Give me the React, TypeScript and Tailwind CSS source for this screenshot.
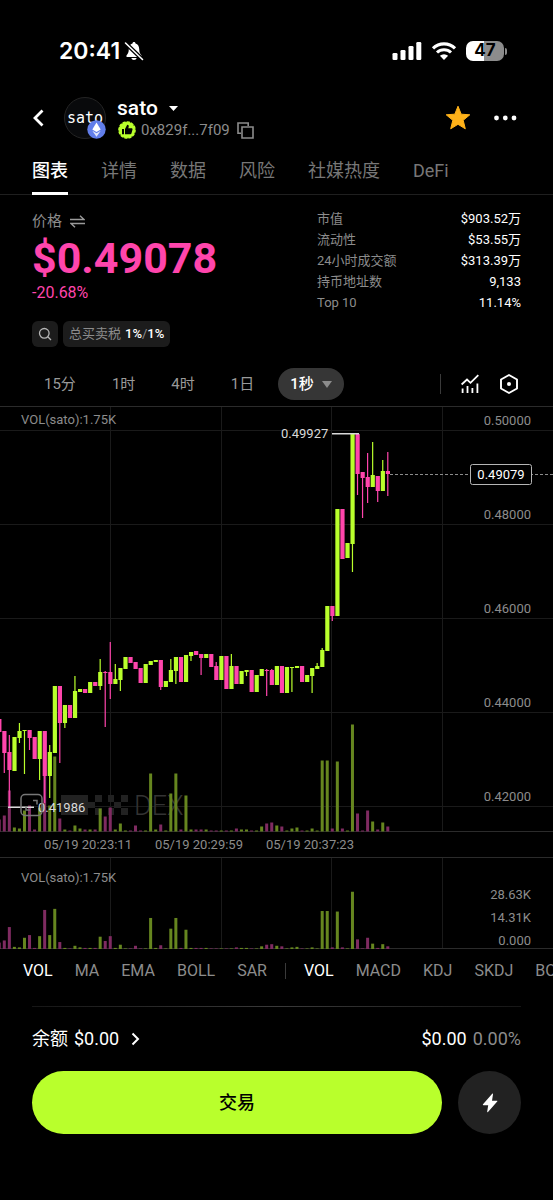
import React from 'react'

type Candle = {
  up: boolean
  high: number
  top: number
  bottom: number
  low: number
  vol: number
}

const UP = '#b9ff2c'
const DOWN = '#ff45ac'
const VOL_UP = '#66861f'
const VOL_DOWN = '#7f2b61'

// [up, high, top, bottom, low, volume]
const rows: [number, number, number, number, number, number][] = [
  [0, 313, 313, 326, 326, 12],
  [0, 325, 325, 347, 367, 16],
  [0, 329, 346, 364, 402, 41],
  [1, 331, 331, 365, 365, 4],
  [1, 317, 325, 332, 337, 3],
  [1, 324, 324, 325, 368, 21],
  [0, 324, 324, 332, 344, 26],
  [0, 331, 331, 353, 353, 2],
  [1, 325, 325, 353, 374, 24],
  [0, 325, 325, 370, 397, 73],
  [1, 339, 346, 370, 392, 26],
  [1, 280, 280, 347, 347, 75],
  [0, 280, 280, 317, 357, 13],
  [1, 299, 299, 317, 322, 2],
  [0, 299, 299, 312, 312, 1],
  [1, 270, 285, 312, 312, 6],
  [1, 283, 283, 286, 286, 3],
  [0, 283, 283, 287, 287, 2],
  [1, 276, 276, 287, 287, 2],
  [0, 276, 276, 280, 280, 2],
  [1, 253, 266, 280, 284, 23],
  [0, 265, 266, 267, 321, 15],
  [0, 236, 266, 278, 293, 24],
  [1, 258, 273, 278, 278, 2],
  [1, 262, 262, 274, 285, 8],
  [1, 251, 251, 263, 263, 1],
  [0, 251, 251, 257, 257, 1],
  [0, 256, 256, 263, 263, 6],
  [0, 262, 262, 277, 277, 1],
  [1, 258, 258, 277, 277, 1],
  [1, 255, 255, 259, 259, 58],
  [1, 254, 254, 256, 256, 2],
  [0, 254, 254, 281, 284, 7],
  [1, 275, 275, 281, 281, 1],
  [1, 253, 264, 276, 276, 38],
  [1, 251, 251, 265, 278, 58],
  [0, 251, 251, 276, 276, 2],
  [1, 249, 249, 276, 276, 36],
  [1, 246, 246, 250, 255, 2],
  [0, 245, 245, 249, 249, 2],
  [0, 248, 248, 252, 269, 2],
  [1, 248, 248, 252, 252, 2],
  [0, 248, 248, 261, 261, 1],
  [0, 256, 260, 274, 274, 1],
  [1, 250, 250, 274, 274, 1],
  [0, 250, 250, 283, 283, 1],
  [1, 248, 260, 283, 283, 1],
  [0, 260, 260, 278, 278, 3],
  [1, 265, 265, 278, 278, 2],
  [1, 264, 264, 266, 270, 2],
  [0, 264, 264, 286, 286, 1],
  [1, 269, 269, 286, 286, 1],
  [1, 263, 263, 270, 270, 5],
  [0, 263, 264, 265, 290, 8],
  [0, 263, 264, 279, 279, 9],
  [1, 260, 260, 279, 279, 6],
  [0, 260, 260, 287, 287, 5],
  [1, 261, 261, 287, 287, 1],
  [1, 261, 261, 262, 286, 3],
  [1, 260, 260, 262, 262, 4],
  [0, 260, 260, 276, 276, 1],
  [1, 269, 269, 276, 276, 1],
  [1, 262, 262, 270, 287, 3],
  [1, 257, 260, 263, 263, 1],
  [1, 242, 244, 261, 261, 71],
  [1, 200, 200, 245, 245, 71],
  [0, 200, 200, 210, 215, 3],
  [1, 103, 103, 210, 210, 70],
  [0, 103, 103, 153, 153, 3],
  [1, 137, 137, 152, 152, 1],
  [1, 28, 28, 138, 166, 107],
  [0, 28, 28, 68, 89, 18],
  [0, 66, 66, 72, 112, 1],
  [0, 47, 71, 81, 97, 21],
  [1, 36, 69, 81, 81, 10],
  [0, 70, 70, 85, 96, 2],
  [1, 54, 65, 85, 85, 9],
  [0, 46, 65, 68, 90, 5],
]

const candles: Candle[] = rows.map(([up, high, top, bottom, low, vol]) => ({
  up: up === 1,
  high,
  top,
  bottom,
  low,
  vol,
}))

const candleX = (i: number) => -0.75 + i * 5.046

const gridX = [110.5, 221.5, 331.5, 442.5]

const priceAxis = [
  { label: '0.50000', y: 25 },
  { label: '0.48000', y: 119 },
  { label: '0.46000', y: 213 },
  { label: '0.44000', y: 307 },
  { label: '0.42000', y: 401 },
]

const timeAxis = [
  { label: '05/19 20:23:11', x: 44 },
  { label: '05/19 20:29:59', x: 155 },
  { label: '05/19 20:37:23', x: 266 },
]

const stats = [
  { label: '市值', value: '$903.52万' },
  { label: '流动性', value: '$53.55万' },
  { label: '24小时成交额', value: '$313.39万' },
  { label: '持币地址数', value: '9,133' },
  { label: 'Top 10', value: '11.14%' },
]

const tabs = ['图表', '详情', '数据', '风险', '社媒热度', 'DeFi']
const periods = ['15分', '1时', '4时', '1日']
const mainIndicators = ['VOL', 'MA', 'EMA', 'BOLL', 'SAR']
const subIndicators = ['VOL', 'MACD', 'KDJ', 'SKDJ', 'BOLL']

const StatusBar: React.FC = () => (
  <div className="flex items-center justify-between pt-9 pr-[46px] pl-[59px]">
    <div className="flex items-center gap-1">
      <span className="font-['Inter',sans-serif] text-[23px] leading-[30px] font-semibold">20:41</span>
      <svg width="20" height="20" viewBox="0 0 20 20" fill="none">
        <path
          d="M10 1c.9 0 1.4.6 1.5 1.4 2.500.8 3.700 2.800 3.700 5.600 0 3.600.9 4.700 2 5.900.8.9.4 2.100-.8 2.100H3.600c-1.200 0-1.600-1.200-.8-2.100 1.100-1.200 2-2.300 2-5.900 0-2.800 1.200-4.800 3.700-5.600C8.600 1.600 9.100 1 10 1z"
          fill="#fff"
        />
        <path d="M7.300 17h5.400c-.4 1.300-1.400 2-2.700 2s-2.300-.7-2.700-2z" fill="#fff" />
        <path d="M1.500 2 L18.500 18.500" stroke="#000" strokeWidth="4" />
        <path d="M1.500 2 L18.500 18.500" stroke="#fff" strokeWidth="1.600" strokeLinecap="round" />
      </svg>
    </div>
    <div className="flex items-center gap-[9px]">
      <svg width="30" height="20" viewBox="0 0 30 20" fill="#fff">
        <rect x="0.500" y="12" width="5" height="7" rx="1.300" />
        <rect x="8.500" y="9" width="5" height="10" rx="1.300" />
        <rect x="16.500" y="5" width="5" height="14" rx="1.300" />
        <rect x="24.300" y="1" width="5" height="18" rx="1.300" />
      </svg>
      <svg width="26" height="20" viewBox="0 0 26 20" fill="none" stroke="#fff">
        <path d="M2 7.300a15.800 15.800 0 0 1 22 0" strokeWidth="3.200" />
        <path d="M6 11.500a10 10 0 0 1 14 0" strokeWidth="3" />
        <path d="M13 19 L8.900 14.800a5.900 5.900 0 0 1 8.200 0z" fill="#fff" stroke="none" />
      </svg>
      <div className="flex items-center gap-px">
        <span className="flex h-5 w-[38px] items-center justify-center rounded-[7px] bg-linear-to-r from-white from-48% to-[#8c8c8c] to-48% font-['Inter',sans-serif] text-[17px] font-bold text-black">
          47
        </span>
        <span className="h-[7px] w-[2px] rounded-r-full bg-[#8c8c8c]" />
      </div>
    </div>
  </div>
)

const TokenHeader: React.FC = () => (
  <header className="mt-[30px] flex items-center justify-between pr-9 pl-8">
    <div className="flex items-center">
      <button type="button" aria-label="返回" className="flex w-8 cursor-pointer items-center">
        <svg width="12" height="18" viewBox="0 0 12 18" fill="none" stroke="#fff" strokeWidth="2.800">
          <path d="M10.500 1.500 3 9l7.500 7.500" />
        </svg>
      </button>
      <div className="relative flex size-[42px] items-center justify-center rounded-full border border-[#242424] bg-[#090a0c]">
        <span className="font-['DejaVu_Sans_Mono',monospace] text-[15px] leading-5 text-white">sato</span>
        <svg className="absolute -right-px -bottom-px" width="19" height="19" viewBox="0 0 19 19">
          <circle cx="9.500" cy="9.500" r="9.200" fill="#627eea" />
          <path d="M9.500 2.500 13.700 9.600 9.500 12.100 5.300 9.600z" fill="#fff" />
          <path d="M5.300 10.800 9.500 13.200l4.200-2.400-4.200 5.900z" fill="#dfe5fb" />
        </svg>
      </div>
      <div className="ml-[11px]">
        <button type="button" className="flex cursor-pointer items-center gap-[11px] text-[21px] leading-6 font-medium">
          sato
          <svg width="9" height="5" viewBox="0 0 9 5" fill="#fff">
            <path d="M0 0h9L4.500 5z" />
          </svg>
        </button>
        <div className="flex items-center text-[15px] leading-5 text-[#8c8c8c]">
          <svg className="mr-1" width="20" height="20" viewBox="0 0 20 20">
            <circle cx="10" cy="10" r="8" fill={UP} />
            <circle cx="10" cy="10" r="8" fill="none" stroke={UP} strokeWidth="1.600" strokeDasharray="2.090 2.090" strokeLinecap="round" />
            <path d="M5 9h2v5.200H5z" fill="#000" />
            <path d="M8 9 10.200 4.800c1.300 0 1.800.9 1.500 1.900L11.300 8.300h3.200c.8 0 1.200.6 1 1.300l-1 3.600c-.2.7-.6 1-1.200 1H8z" fill="#000" />
          </svg>
          <span>0x829f...7f09</span>
          <button type="button" aria-label="复制地址" className="ml-[7px] cursor-pointer">
            <svg width="17" height="17" viewBox="0 0 17 17" fill="none" stroke="#8c8c8c" strokeWidth="1.600">
              <path d="M4 11.200H1V1h10.200v3" />
              <path d="M5 5h11v11H5z" />
            </svg>
          </button>
        </div>
      </div>
    </div>
    <div className="flex items-center gap-[22px]">
      <button type="button" aria-label="收藏" className="cursor-pointer">
        <svg width="26" height="26" viewBox="0 0 26 26" fill="#ffb219" stroke="#ffb219" strokeWidth="1" strokeLinejoin="round">
          <path d="M13 1.200l3.200 8 8.600.6-6.600 5.500 2.100 8.500L13 19.300l-7.300 4.500 2.100-8.500L1.200 9.800l8.600-.6z" />
        </svg>
      </button>
      <button type="button" aria-label="更多" className="cursor-pointer">
        <svg width="24" height="6" viewBox="0 0 24 6" fill="#fff">
          <circle cx="3.500" cy="3" r="2.400" />
          <circle cx="12.300" cy="3" r="2.400" />
          <circle cx="21" cy="3" r="2.400" />
        </svg>
      </button>
    </div>
  </header>
)

const PriceInfo: React.FC = () => (
  <section className="flex justify-between px-8">
    <div className="pt-[14px]">
      <div className="flex items-center gap-2 text-[15px] leading-6 text-[#8c8c8c]">
        价格
        <svg width="15" height="13" viewBox="0 0 15 13" fill="none" stroke="#9a9a9a" strokeWidth="1.400">
          <path d="M0 4.500h14L10 .8" />
          <path d="M15 8.500H1l4 3.700" />
        </svg>
      </div>
      <div className="text-[43px] leading-[50px] font-bold text-[#ff45ac]">$0.49078</div>
      <div className="text-base leading-5 text-[#ff45ac]">-20.68%</div>
      <div className="mt-[18px] flex gap-[5px]">
        <button type="button" aria-label="搜索" className="flex size-[26px] cursor-pointer items-center justify-center rounded-md bg-[#1c1c1c]">
          <svg width="14" height="14" viewBox="0 0 14 14" fill="none" stroke="#b5b5b5" strokeWidth="1.300">
            <circle cx="6.300" cy="6.300" r="4.800" />
            <path d="M9.800 9.800 13 13" />
          </svg>
        </button>
        <div className="flex h-[26px] items-center rounded-md bg-[#1c1c1c] px-[6px] text-[13px] text-[#8c8c8c]">
          <span className="mr-1">总买卖税</span>
          <span className="font-medium text-white">1%</span>/<span className="font-medium text-white">1%</span>
        </div>
      </div>
    </div>
    <dl className="w-[204px] pt-[13px] text-[13px] leading-[21px]">
      {stats.map(s => (
        <div key={s.label} className="flex justify-between">
          <dt className="text-[#8c8c8c]">{s.label}</dt>
          <dd className="text-white">{s.value}</dd>
        </div>
      ))}
    </dl>
  </section>
)

const PeriodBar: React.FC = () => (
  <div className="mt-[21px] mb-[6px] flex items-center justify-between pr-[34px] pl-8 text-[15px]">
    <div className="flex gap-3">
      {periods.map(p => (
        <button key={p} type="button" className="h-8 cursor-pointer px-3 text-[#9a9a9a]">
          {p}
        </button>
      ))}
      <button type="button" className="flex h-8 cursor-pointer items-center gap-2 rounded-full bg-[#363636] px-3 font-medium text-white">
        1秒
        <svg width="10" height="7" viewBox="0 0 10 7" fill="#8c8c8c">
          <path d="M0 0h10L5 7z" />
        </svg>
      </button>
    </div>
    <div className="flex items-center gap-5">
      <span className="h-5 w-px bg-[#3a3a3a]" />
      <button type="button" aria-label="指标" className="cursor-pointer">
        <svg width="18" height="20" viewBox="0 0 18 20" fill="none" stroke="#fff" strokeWidth="1.800">
          <path d="M.6 10.500 6 5.500l3.500 3.300L17.300 1.200" />
          <path d="M1.600 14.500V19M6.500 12v7M11.400 14v5M16.400 9.500V19" />
        </svg>
      </button>
      <button type="button" aria-label="设置" className="cursor-pointer">
        <svg width="20" height="20" viewBox="0 0 20 20" fill="none" stroke="#fff" strokeWidth="1.900" strokeLinejoin="round">
          <path d="M10 1 18 5.500v9L10 19 2 14.500v-9z" />
          <circle cx="10" cy="10" r="2" fill="#fff" stroke="none" />
        </svg>
      </button>
    </div>
  </div>
)

const Watermark: React.FC = () => (
  <g>
    <g fill="#222222">
      <path d="M61 389h20v20H61zM81 389h7v20h-7zM88 396h7v6h-7zM95 389h7v7h-7zM95 402h7v7h-7z" />
      <path d="M108 389h6v7h-6zM121 389h7v7h-7zM114 396h7v6h-7zM108 402h6v7h-6zM121 402h7v7h-7z" />
    </g>
    <text x="134" y="409" fontSize="27" fontWeight="300" fill="#333333">DEX</text>
  </g>
)

const PriceChart: React.FC = () => (
  <svg className="block w-full" viewBox="0 0 553 543" fontSize="13" fill="#8c8c8c">
    {/* 网格 */}
    <g stroke="#1a1a1a">
      {gridX.map(x => (
        <path key={x} d={`M${x} 0V425M${x} 451V543`} />
      ))}
      {priceAxis.map(p => (
        <path key={p.label} d={`M0 ${p.y - 0.5}H553`} />
      ))}
    </g>
    <path d="M0 .5H553M0 425.500H553M0 451.500H553M0 542.500H553" stroke="#2b2b2b" />
    <Watermark />

    {/* K线和成交量 */}
    {candles.map((c, i) => {
      const x = candleX(i)
      const color = c.up ? UP : DOWN
      const volColor = c.up ? VOL_UP : VOL_DOWN
      return (
        <g key={i}>
          <rect x={x - 1.5} y={425.5 - c.vol} width="3" height={c.vol} fill={volColor} />
          <rect x={x - 1.5} y={543 - c.vol * 0.535} width="3" height={c.vol * 0.535} fill={volColor} />
          <rect x={x - 0.6} y={c.high} width="1.200" height={c.low - c.high} fill={color} />
          <rect x={x - 2} y={c.top} width="4.200" height={Math.max(c.bottom - c.top, 1)} fill={color} />
        </g>
      )
    })}

    <text x="21" y="18">VOL(sato):1.75K</text>
    <text x="21" y="476">VOL(sato):1.75K</text>
    {priceAxis.map(p => (
      <text key={p.label} x="531" y={p.y - 6} textAnchor="end">{p.label}</text>
    ))}
    {timeAxis.map(t => (
      <text key={t.label} x={t.x} y="443">{t.label}</text>
    ))}
    <text x="531" y="493" textAnchor="end">28.63K</text>
    <text x="531" y="516" textAnchor="end">14.31K</text>
    <text x="531" y="539" textAnchor="end">0.000</text>

    {/* 最高价和最低价 */}
    <g fill="#d9d9d9">
      <text x="281" y="32">0.49927</text>
      <rect x="332" y="27" width="27" height="1.500" />
      <rect x="8" y="400.500" width="26" height="1.500" />
      <text x="38" y="406">0.41986</text>
    </g>

    {/* 全屏 */}
    <g fill="none" stroke="#777777" strokeWidth="1.500">
      <rect x="21" y="388.500" width="21" height="21" rx="4" />
      <path d="M33 394.500h4v4M30 404h-4v-4" />
    </g>

    {/* 当前价 */}
    <path d="M390 68.500H553" stroke="#8c8c8c" strokeDasharray="3 2" />
    <rect x="470.500" y="58.500" width="61" height="20" rx="2" fill="#000" stroke="#b5b5b5" />
    <text x="501" y="73" textAnchor="middle" fill="#fff">0.49079</text>
  </svg>
)

const IndicatorBar: React.FC = () => (
  <div className="flex items-center gap-[22px] overflow-hidden pt-[10px] pl-[23px] text-base leading-6 whitespace-nowrap text-[#8c8c8c]">
    {mainIndicators.map((name, i) => (
      <button key={name} type="button" className={`cursor-pointer ${i === 0 ? 'text-white' : ''}`}>
        {name}
      </button>
    ))}
    <span className="-mx-1 h-4 w-px shrink-0 bg-[#3a3a3a]" />
    {subIndicators.map((name, i) => (
      <button key={name} type="button" className={`cursor-pointer ${i === 0 ? 'text-white' : ''}`}>
        {name}
      </button>
    ))}
  </div>
)

const TradeBar: React.FC = () => (
  <footer className="mt-[23px] px-8 pb-[66px]">
    <div className="h-px bg-linear-to-r from-[#161616] via-[#3a3a3a] to-[#161616]" />
    <div className="flex items-center justify-between pt-[19px] text-lg leading-[26px]">
      <button type="button" className="flex cursor-pointer items-center gap-[6px]">
        <span>余额</span>
        <span>$0.00</span>
        <svg className="ml-[6px]" width="9" height="14" viewBox="0 0 9 14" fill="none" stroke="#fff" strokeWidth="2">
          <path d="M1.500 1.500 7 7l-5.500 5.500" />
        </svg>
      </button>
      <div className="flex gap-[6px]">
        <span>$0.00</span>
        <span className="text-[#8c8c8c]">0.00%</span>
      </div>
    </div>
    <div className="mt-[19px] flex gap-4">
      <button type="button" className="h-[63px] flex-1 cursor-pointer rounded-full bg-[#b9ff2c] text-lg font-medium text-black">
        交易
      </button>
      <button type="button" aria-label="闪电交易" className="flex size-[63px] cursor-pointer items-center justify-center rounded-full bg-[#222222]">
        <svg width="16" height="20" viewBox="0 0 16 20" fill="#fff">
          <path d="M10.200.8 1 11.300c-.4.500-.2.900.4.900h4.800L5.200 18.600c-.1.700.4.900.8.400L15.200 8.600c.4-.5.200-.9-.4-.9H10l1-6.500c.1-.7-.4-.9-.8-.4z" />
        </svg>
      </button>
    </div>
  </footer>
)

export default function App() {
  return (
    <main className="min-h-screen overflow-hidden bg-black font-['Roboto','Noto_Sans_CJK_SC',sans-serif] text-white">
      <StatusBar />
      <TokenHeader />
      <nav className="mt-[15px] flex gap-[33px] border-b border-[#1f1f1f] px-8 text-lg">
        {tabs.map((t, i) => (
          <button
            key={t}
            type="button"
            className={`-mb-px h-10 cursor-pointer border-b-[3px] pb-[5px] ${
              i === 0 ? 'border-white font-medium text-white' : 'border-transparent text-[#777777]'
            }`}
          >
            {t}
          </button>
        ))}
      </nav>
      <PriceInfo />
      <PeriodBar />
      <PriceChart />
      <IndicatorBar />
      <TradeBar />
    </main>
  )
}
